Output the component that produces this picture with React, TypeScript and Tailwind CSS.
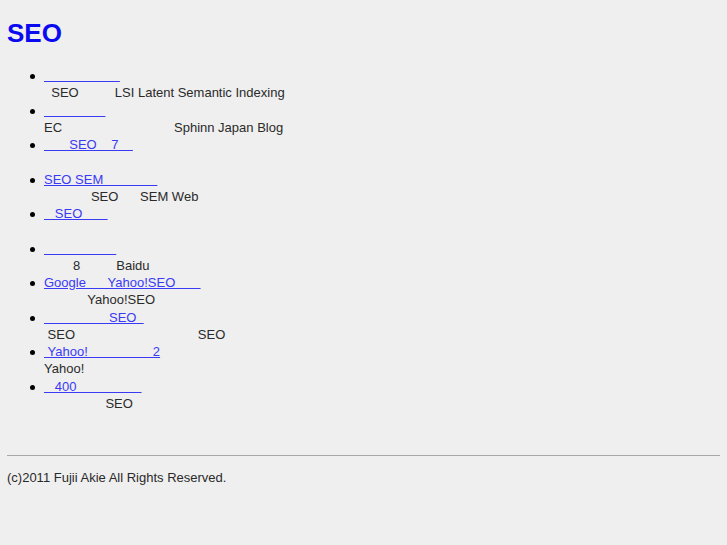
import React from "react";

// missing-glyph runs in the original render as blank space, so we keep the gaps with nbsp
const s = (n: number) => "\u00a0".repeat(n);

type Item = { link: string; text: string };

const items: Item[] = [
  { link: s(21), text: s(2) + "SEO" + s(10) + "LSI Latent Semantic Indexing" },
  { link: s(17), text: "EC" + s(31) + "Sphinn Japan Blog" },
  { link: s(7) + "SEO" + s(4) + "7" + s(4), text: s(1) },
  { link: "SEO SEM" + s(15), text: s(13) + "SEO" + s(6) + "SEM Web" },
  { link: s(3) + "SEO" + s(7), text: s(1) },
  { link: s(20), text: s(8) + "8" + s(10) + "Baidu" },
  { link: "Google" + s(6) + "Yahoo!SEO" + s(7), text: s(12) + "Yahoo!SEO" },
  { link: s(18) + "SEO" + s(2), text: s(1) + "SEO" + s(34) + "SEO" },
  { link: s(1) + "Yahoo!" + s(18) + "2", text: "Yahoo!" },
  { link: s(3) + "400" + s(18), text: s(17) + "SEO" },
];

export default function App() {
  return (
    <div className="min-h-screen bg-[#efefef] px-[7px] pt-[18px] font-['Liberation_Sans',Arial,sans-serif] text-[13px] leading-[17.25px] text-[#2a2a2a]">
      <h1 className="text-[26px] leading-[30px] font-bold text-[#0a0af0]">SEO</h1>

      <ul className="mt-[19px] list-none pl-[37px]">
        {items.map((it, i) => (
          <li key={i}>
            {/* bullet drawn in flow, pulled into the list's indent */}
            <span className="-ml-[14px] mr-[9px] inline-block h-[5px] w-[5px] rounded-full bg-black align-middle" />
            <a href="#" className="whitespace-pre text-[#3a3af5] underline">
              {it.link}
            </a>
            <br />
            <span className="whitespace-pre">{it.text}</span>
          </li>
        ))}
      </ul>

      <hr className="mt-[43px] border-t border-[#a8a8a8]" />
      <p className="mt-[13px]">(c)2011 Fujii Akie All Rights Reserved.</p>
    </div>
  );
}
